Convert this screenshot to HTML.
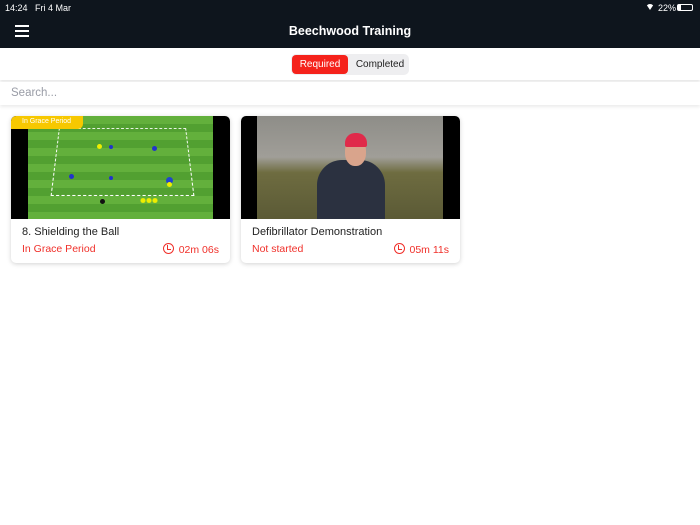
<!DOCTYPE html>
<html><head><meta charset="utf-8"><style>
*{margin:0;padding:0;box-sizing:border-box}
body{width:700px;height:525px;background:#fff;font-family:"Liberation Sans",sans-serif;position:relative;overflow:hidden}
.top{position:absolute;left:0;top:0;width:700px;height:48px;background:#0e151d;color:#fff}
.sb{position:absolute;top:3px;font-size:9px}
.title{position:absolute;top:24px;width:100%;text-align:center;font-size:12.5px;font-weight:bold}
.hb{position:absolute;left:15px;width:14px;height:2px;background:#fff}
.seg{position:absolute;left:0;top:48px;width:700px;height:32px;background:#fff;box-shadow:0 2px 3px rgba(0,0,0,.1)}
.sg{position:absolute;left:291px;top:54px;width:118px;height:21px;background:#eeeef0;border-radius:5px}
.req{position:absolute;left:292px;top:55px;width:56px;height:19px;background:#f5221b;border-radius:4px;color:#fff;font-size:10px;text-align:center;line-height:19px}
.cmp{position:absolute;left:350px;top:55px;width:60px;line-height:19px;font-size:10px;color:#222;text-align:center}
.search{position:absolute;left:0;top:82px;width:700px;height:23px;background:#fff;box-shadow:0 2px 3px rgba(0,0,0,.08);color:#999ca6;font-size:11.5px;padding:5px 11px}
.card{position:absolute;top:116px;width:219px;height:147px;background:#fff;border-radius:5px;box-shadow:0 1px 5px rgba(0,0,0,.18);overflow:hidden}
.img{position:absolute;left:0;top:0;width:219px;height:103px;background:#000}
.ct{position:absolute;left:11px;top:110px;font-size:11px;color:#222}
.st{position:absolute;left:11px;top:127px;font-size:10.5px;color:#f0302a}
.tm{position:absolute;right:11px;top:127px;font-size:10.5px;color:#f0302a}
.clk{display:inline-block;width:11px;height:11px;border:1.4px solid #f0302a;border-radius:50%;vertical-align:-1px;margin-right:5px;position:relative}
.clk:after{content:"";position:absolute;left:3.5px;top:1px;width:2.5px;height:3.5px;border-left:1.3px solid #f0302a;border-bottom:1.3px solid #f0302a}
</style></head><body>
<div class="top">
<div class="sb" style="left:5px">14:24 &nbsp; Fri 4 Mar</div>
<div class="sb" style="left:658px">22%</div>
<div style="position:absolute;left:646px;top:4px;width:8px;height:6px;border-radius:8px 8px 0 0;background:#fff;clip-path:polygon(0 0,100% 0,50% 100%)"></div>
<div style="position:absolute;left:677px;top:4px;width:16px;height:7px;border:1px solid #fff;border-radius:2px"><div style="width:3px;height:5px;background:#fff"></div></div>
<div class="hb" style="top:25px"></div><div class="hb" style="top:30px"></div><div class="hb" style="top:35px"></div>
<div class="title">Beechwood Training</div>
</div>
<div class="seg"></div>
<div class="sg"></div><div class="req">Required</div><div class="cmp">Completed</div>
<div class="search">Search...</div>

<div class="card" style="left:11px">
<div class="img">
<div style="position:absolute;left:17px;top:0;width:185px;height:103px;background:repeating-linear-gradient(180deg,#63b03c 0 8px,#52a031 8px 16px)"></div>
<div style="position:absolute;left:44px;top:8px;width:135px;height:72px;border:1px dashed #fff;transform:perspective(200px) rotateX(20deg)"></div>
<div style="position:absolute;left:0;top:0;width:72px;height:13px;background:#f7c800;color:#fff;font-size:7px;padding:2px 0 0 11px;border-radius:5px 0 5px 0">In Grace Period</div>
<div style="position:absolute;left:86px;top:28px;width:5px;height:5px;border-radius:50%;background:#ee0"></div>
<div style="position:absolute;left:98px;top:29px;width:4px;height:4px;border-radius:50%;background:#23c"></div>
<div style="position:absolute;left:141px;top:30px;width:5px;height:5px;border-radius:50%;background:#23c"></div>
<div style="position:absolute;left:58px;top:58px;width:5px;height:5px;border-radius:50%;background:#23c"></div>
<div style="position:absolute;left:98px;top:60px;width:4px;height:4px;border-radius:50%;background:#23c"></div>
<div style="position:absolute;left:155px;top:61px;width:7px;height:7px;border-radius:50%;background:#2244cc"></div>
<div style="position:absolute;left:156px;top:66px;width:5px;height:5px;border-radius:50%;background:#ee0"></div>
<div style="position:absolute;left:129px;top:82px;width:18px;height:5px;background:radial-gradient(circle,#ee0 2px,transparent 3px) 0 0/6px 5px"></div>
<div style="position:absolute;left:89px;top:83px;width:5px;height:5px;border-radius:50%;background:#111"></div>
</div>
<div class="ct">8. Shielding the Ball</div>
<div class="st">In Grace Period</div>
<div class="tm"><span class="clk"></span>02m 06s</div>
</div>

<div class="card" style="left:241px">
<div class="img">
<div style="position:absolute;left:16px;top:0;width:186px;height:103px;background:linear-gradient(180deg,#8e8d88 0,#a09e98 40%,#6e6c40 55%,#5b5a36 100%)"></div>
<div style="position:absolute;left:76px;top:44px;width:68px;height:59px;background:#2b3140;border-radius:25px 25px 0 0"></div>
<div style="position:absolute;left:104px;top:22px;width:21px;height:28px;background:#d9a48c;border-radius:45%"></div>
<div style="position:absolute;left:104px;top:17px;width:22px;height:14px;background:#e02a4a;border-radius:10px 10px 2px 2px"></div>
</div>
<div class="ct">Defibrillator Demonstration</div>
<div class="st">Not started</div>
<div class="tm"><span class="clk"></span>05m 11s</div>
</div>
</body></html>
